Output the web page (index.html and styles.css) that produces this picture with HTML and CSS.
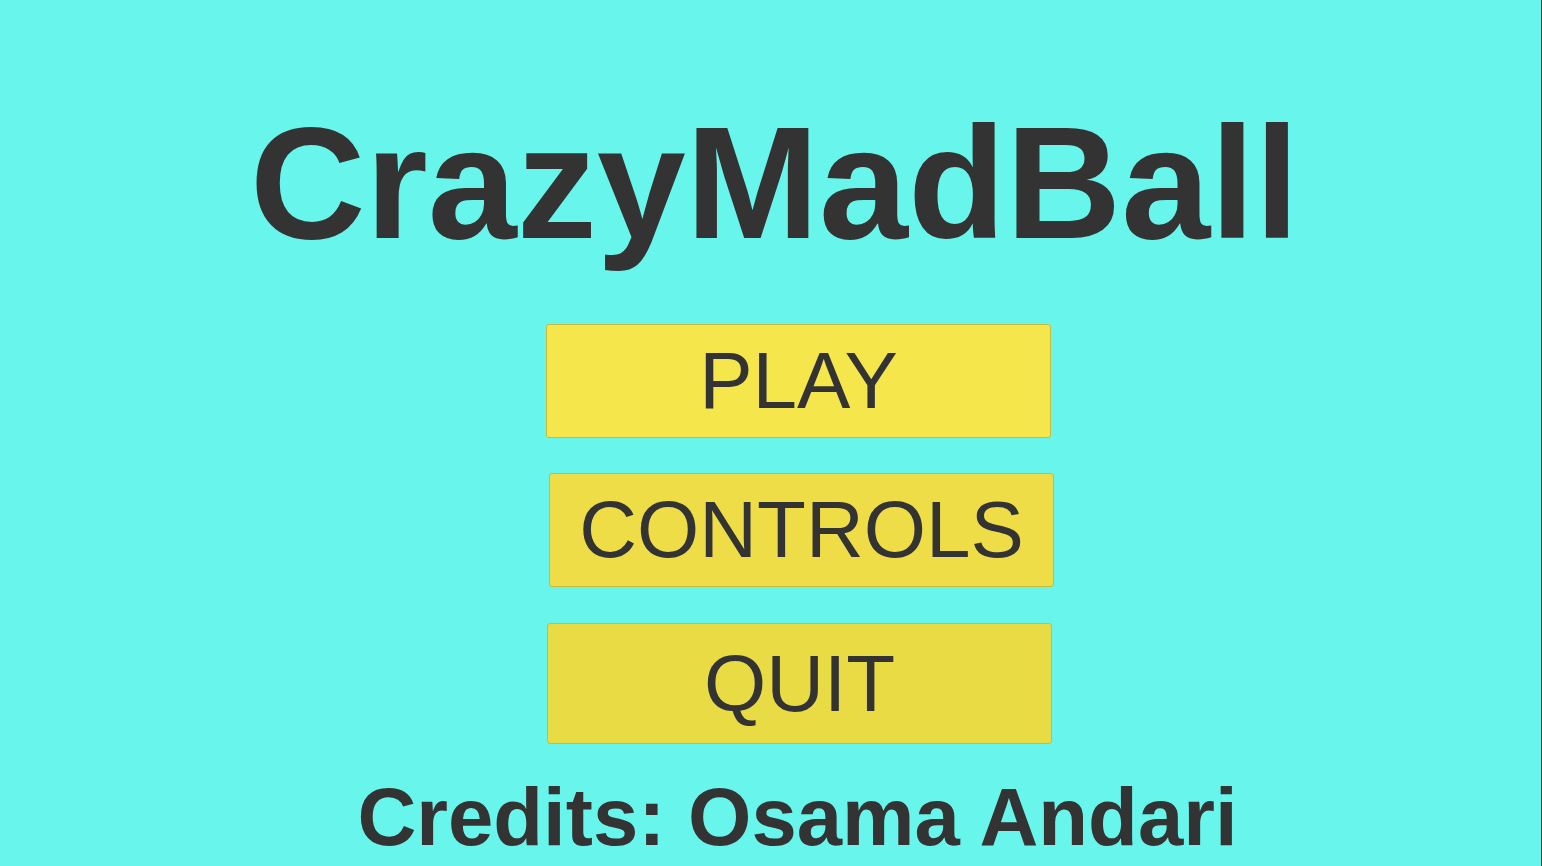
FILE: index.html
```html
<!DOCTYPE html>
<html>
<head>
<meta charset="utf-8">
<link rel="stylesheet" href="styles.css">
</head>
<body>
<div class="screen">
  <h1 class="title">CrazyMadBall</h1>
  <div class="menu">
    <div class="btn btn-play">PLAY</div>
    <div class="btn btn-controls">CONTROLS</div>
    <div class="btn btn-quit">QUIT</div>
  </div>
  <div class="credits">Credits: Osama Andari</div>
</div>
</body>
</html>
```

FILE: styles.css
```css
html, body {
  margin: 0;
  padding: 0;
  height: 100%;
  overflow: hidden;
}
body {
  background: #67f5ec;
  font-family: "Liberation Sans", Arial, sans-serif;
  color: #333333;
}
.screen {
  box-sizing: border-box;
  width: 1542px;
  height: 866px;
  border-right: 1px solid #0b3f3d;
  display: flex;
  flex-direction: column;
  align-items: center;
  padding-top: 103px;
}
.title {
  margin: 0 0 0 8px;
  font-size: 160px;
  line-height: 160px;
  font-weight: 700;
}
.menu {
  margin-top: 61px;
  margin-left: 56px;
  display: flex;
  flex-direction: column;
  align-items: center;
  gap: 35px;
}
.btn {
  box-sizing: border-box;
  width: 505px;
  height: 114px;
  border: 1px solid #c8bb3c;
  border-radius: 3px;
  display: flex;
  align-items: center;
  justify-content: center;
  font-size: 80px;
  line-height: 80px;
  font-weight: 400;
}
.btn-play {
  background: #f5e64b;
}
.btn-controls {
  background: #eedd46;
  margin-left: 6px;
}
.btn-quit {
  background: #e9db44;
  margin-left: 2px;
  height: 121px;
  margin-top: 1px;
}
.credits {
  margin-top: 32px;
  margin-left: 54px;
  font-size: 81.5px;
  line-height: 82px;
  font-weight: 700;
}
```
